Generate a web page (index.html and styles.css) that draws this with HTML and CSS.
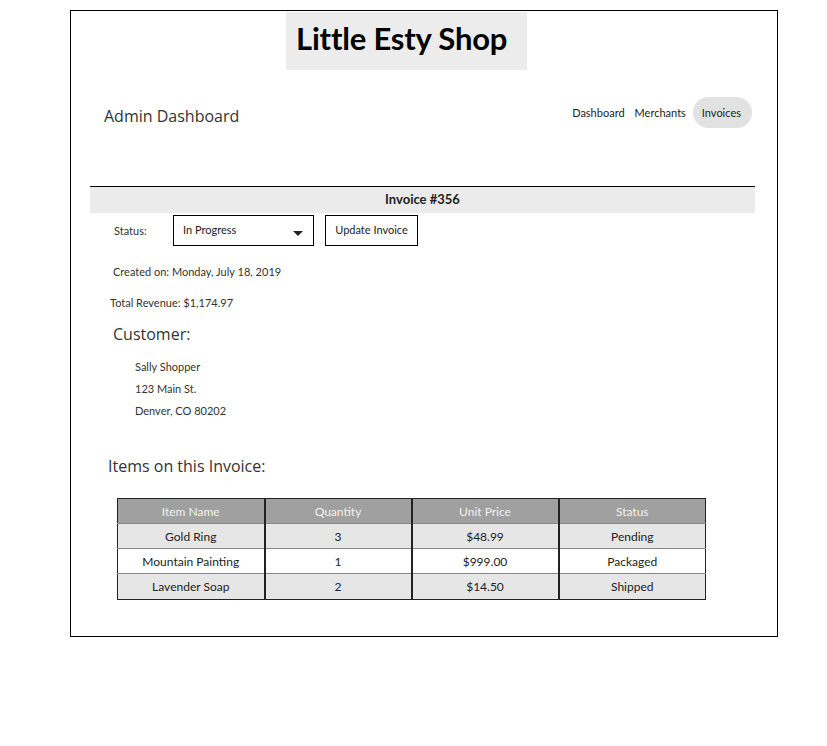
FILE: index.html
```html
<!DOCTYPE html>
<html>
<head>
<meta charset="utf-8">
<link rel="stylesheet" href="styles.css">
</head>
<body>
<div class="page">
  <header class="top">
    <div class="brand"><h1>Little Esty Shop</h1></div>
    <div class="subhead">
      <h2 class="admin">Admin Dashboard</h2>
      <nav class="nav">
        <a class="nav-link">Dashboard</a>
        <a class="nav-link">Merchants</a>
        <a class="nav-link active">Invoices</a>
      </nav>
    </div>
  </header>
  <section class="invoice">
    <div class="invoice-title">Invoice #356</div>
    <div class="status-row">
      <span class="status-label">Status:</span>
      <div class="select">In Progress<span class="caret"></span></div>
      <button class="update">Update Invoice</button>
    </div>
    <p class="created">Created on: Monday, July 18, 2019</p>
    <p class="revenue">Total Revenue: $1,174.97</p>
    <h3 class="customer-h">Customer:</h3>
    <div class="address">
      <p>Sally Shopper</p>
      <p>123 Main St.</p>
      <p>Denver, CO 80202</p>
    </div>
    <h3 class="items-h">Items on this Invoice:</h3>
    <table class="items">
      <thead>
        <tr><th>Item Name</th><th>Quantity</th><th>Unit Price</th><th>Status</th></tr>
      </thead>
      <tbody>
        <tr class="odd"><td>Gold Ring</td><td>3</td><td>$48.99</td><td>Pending</td></tr>
        <tr><td>Mountain Painting</td><td>1</td><td>$999.00</td><td>Packaged</td></tr>
        <tr class="odd"><td>Lavender Soap</td><td>2</td><td>$14.50</td><td>Shipped</td></tr>
      </tbody>
    </table>
  </section>
</div>
</body>
</html>
```
FILE: styles.css
```css
* { box-sizing: border-box; }
body {
  margin: 0;
  font-family: Lato, "Noto Sans", sans-serif;
  color: #333;
  background: #fff;
}
.page {
  margin: 10px 0 0 70px;
  width: 708px;
  height: 627px;
  border: 1px solid #000;
  padding-top: 1px;
}
.brand {
  margin-left: 215px;
  width: 241px;
  height: 58px;
  background: #ececec;
  padding: 0 0 6px 10px;
  display: flex;
  align-items: center;
}
.brand h1 {
  margin: 0;
  font-size: 31px;
  font-weight: 700;
  color: #000;
  letter-spacing: -0.2px;
}
.subhead {
  display: flex;
  justify-content: space-between;
  align-items: flex-start;
  margin-top: 27px;
  padding: 0 25px 0 33px;
}
.admin {
  margin: 8px 0 0;
  font-family: "Open Sans", sans-serif;
  font-weight: 400;
  font-size: 16px;
  color: #333;
}
.nav {
  display: flex;
  align-items: center;
}
.nav-link {
  font-size: 11px;
  color: #222;
  padding: 0 5px;
  line-height: 31px;
  border-radius: 16px;
}
.nav-link.active {
  background: #e2e2e2;
  padding: 0 11px 0 9px;
  margin-left: 2px;
}
.invoice {
  margin: 58px 22px 0 19px;
}
.invoice-title {
  border-top: 1px solid #000;
  background: #ebebeb;
  height: 27px;
  line-height: 25px;
  text-align: center;
  font-weight: 700;
  font-size: 13px;
  color: #222;
}
.status-row {
  display: flex;
  align-items: center;
  margin-top: 2px;
  height: 31px;
}
.status-label {
  font-size: 11px;
  margin-left: 24px;
  width: 59px;
  margin-top: -1px;
}
.select {
  position: relative;
  width: 141px;
  height: 31px;
  border: 1px solid #000;
  font-size: 11px;
  color: #222;
  padding-left: 9px;
  line-height: 28px;
}
.caret {
  position: absolute;
  right: 10px;
  top: 15px;
  width: 0;
  height: 0;
  border-left: 5px solid transparent;
  border-right: 5px solid transparent;
  border-top: 5px solid #222;
}
.update {
  margin-left: 11px;
  width: 93px;
  height: 31px;
  border: 1px solid #000;
  background: #fff;
  font-family: Lato, "Noto Sans", sans-serif;
  font-size: 11px;
  color: #222;
  padding: 0 0 2px;
}
.created, .revenue {
  margin: 0;
  font-size: 11px;
  color: #333;
}
.created { margin: 19px 0 0 23px; }
.revenue { margin: 18px 0 0 20px; }
.customer-h, .items-h {
  margin: 0;
  font-family: "Open Sans", sans-serif;
  font-weight: 400;
  font-size: 16px;
  color: #333;
}
.customer-h { margin: 14px 0 0 23px; }
.address { margin: 11px 0 0 45px; }
.address p {
  margin: 0;
  font-size: 11px;
  line-height: 22px;
  color: #333;
}
.items-h { margin: 33px 0 0 18px; }
.items {
  margin: 21px 0 0 27px;
  width: 589px;
  border-collapse: collapse;
  border: 1px solid #222;
  table-layout: fixed;
  font-size: 12px;
}
.items th, .items td {
  height: 25px;
  padding: 0;
  text-align: center;
  border-right: 2px solid #222;
  border-bottom: 1px solid #888;
}
.items th:last-child, .items td:last-child { border-right: none; }
.items tbody tr:last-child td { height: 26px; border-bottom: 1px solid #222; }
.items th {
  background: #a0a0a0;
  color: #f2f2f2;
  font-weight: 400;
}
.items td { color: #222; }
.items tr.odd td { background: #e6e6e6; }
```
